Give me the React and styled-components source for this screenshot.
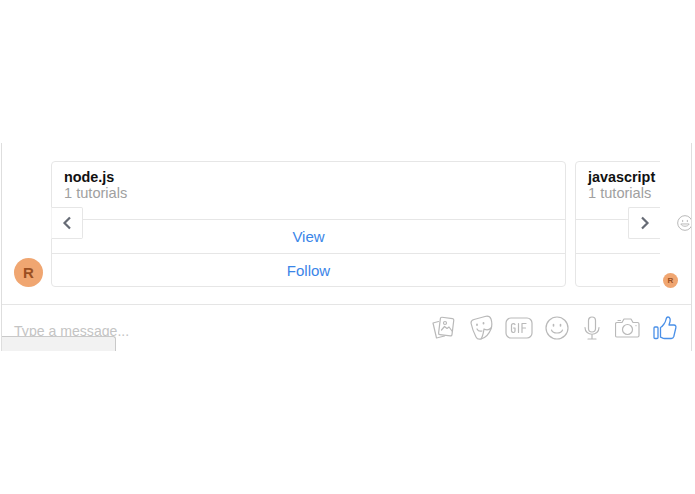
import React from "react";
import styled, { createGlobalStyle } from "styled-components";

const Global = createGlobalStyle`
  html, body { margin: 0; background: #fff; }
  body { font-family: "Liberation Sans", Arial, sans-serif; }
`;

const Page = styled.div`
  padding-top: 143px;
  height: 351px;
`;

const Frame = styled.div`
  position: relative;
  width: 689px;
  height: 208px;
  margin-left: 1px;
  border-left: 1px solid #dedede;
  border-right: 1px solid #dedede;
  overflow: hidden;
`;

const Messages = styled.div`
  display: flex;
  height: 162px;
  box-sizing: border-box;
  padding: 18px 0 17px 12px;
  border-bottom: 1px solid #e5e5e5;
`;

const Avatar = styled.div`
  flex: none;
  align-self: flex-end;
  width: ${(p) => p.$size}px;
  height: ${(p) => p.$size}px;
  border-radius: 50%;
  background: #f0a671;
  color: #9a4f22;
  font-weight: bold;
  font-size: ${(p) => (p.$size > 20 ? 15 : 8)}px;
  line-height: ${(p) => p.$size}px;
  text-align: center;
`;

const Carousel = styled.div`
  position: relative;
  flex: none;
  display: flex;
  gap: 9px;
  width: 609px;
  margin-left: 8px;
  overflow: hidden;
`;

const Card = styled.div`
  flex: none;
  width: 515px;
  height: 126px;
  box-sizing: border-box;
  border: 1px solid #e6e6e6;
  border-radius: 4px;
`;

const CardHead = styled.div`
  height: 57px;
  box-sizing: border-box;
  padding: 7px 12px 0;
`;

const CardTitle = styled.div`
  font-size: 14.4px;
  font-weight: bold;
  line-height: 17px;
  color: #111;
`;

const CardSub = styled.div`
  font-size: 14.6px;
  line-height: 15px;
  color: #a0a0a0;
`;

const CardAction = styled.div`
  height: 34px;
  box-sizing: border-box;
  border-top: 1px solid #e6e6e6;
  font-size: 15px;
  line-height: 33px;
  text-align: center;
  color: #3a85e8;
`;

const Arrow = styled.div`
  position: absolute;
  top: 46px;
  ${(p) => (p.$side === "left" ? "left: 0;" : "right: 0;")}
  display: flex;
  align-items: center;
  justify-content: center;
  width: 32px;
  height: 32px;
  box-sizing: border-box;
  background: #fff;
  border: 1px solid #e6e6e6;
  ${(p) => (p.$side === "left" ? "border-left-color: #f3f3f3;" : "border-right: 0;")}
  border-radius: ${(p) => (p.$side === "left" ? "0 2px 2px 0" : "2px 0 0 2px")};
`;

const Side = styled.div`
  flex: none;
  display: flex;
  flex-direction: column;
  align-items: flex-start;
  width: 30px;
`;

const SideEmoji = styled.svg`
  display: block;
  width: 16px;
  height: 16px;
  margin: 54px 0 0 17px;
`;

const SeenAvatar = styled(Avatar)`
  align-self: flex-start;
  margin: auto 0 -1px 3px;
`;

const Composer = styled.div`
  display: flex;
  align-items: center;
  height: 46px;
  padding-left: 12px;
`;

const Placeholder = styled.div`
  flex: 1;
  font-size: 14.1px;
  line-height: 17px;
  color: #c4c4c4;
  padding-top: 7px;
`;

const Icons = styled.div`
  display: flex;
  align-items: center;
  margin-right: 6px;
`;

const IconSlot = styled.div`
  display: flex;
  justify-content: center;
  width: ${(p) => p.$w}px;
`;

const Tray = styled.div`
  position: absolute;
  left: -2px;
  bottom: 0;
  width: 114px;
  height: 14px;
  background: #f2f2f2;
  border: 1px solid #c9c9c9;
  border-bottom: 0;
  border-radius: 0 3px 0 0;
`;

const gray = { fill: "none", stroke: "#b9b9b9", strokeWidth: 1.2, strokeLinecap: "round", strokeLinejoin: "round" };

const Chevron = ({ left }) => (
  <svg width="10" height="14" viewBox="0 0 10 14">
    <path d={left ? "M8 1.5 2.5 7 8 12.5" : "M2 1.5 7.500 7 2 12.5"} fill="none" stroke="#666b75" strokeWidth="2.200" />
  </svg>
);

const PhotosIcon = () => (
  <svg width="23" height="24" viewBox="0 0 23 24" {...gray}>
    <path d="M6.500 5.500 1 7l3.500 15 8-2" />
    <rect x="7.500" y="1.800" width="13.500" height="17.500" rx="1.500" transform="rotate(7 14 10)" />
    <circle cx="13" cy="7" r="1.500" />
    <path d="m9.500 14 3-3.500 2.500 2 2-1.500 3 4" />
  </svg>
);

const StickerIcon = () => (
  <svg width="24" height="26" viewBox="0 0 24 26" {...gray}>
    <path d="M2 8c0-2 1-3 3-3.500L16 1.500c3-.8 5 0 6 2.500 1 3 1 7 0 10-2 5-6 9-10 10-2 .5-4 0-5-2-2-4-4-9-5-14z" />
    <path d="M22 13c-2 2-5 2-7 1-.5 3-1 7-3 10" />
    <path d="M8 14c1 2 3 2.500 5 2" />
    <path d="M8 9.500v.5M14.500 8v.5" strokeWidth="1.800" />
  </svg>
);

const GifIcon = () => (
  <svg width="28" height="22" viewBox="0 0 28 22" {...gray}>
    <rect x="1" y="1" width="26" height="20" rx="5" />
    <path d="M10 7.500C9.500 6.500 7 6 6.500 8v6c.5 2 3.500 2 3.500 0v-3H8.500M13.500 6.500v9M17 15.500v-9h4M17 11h3.500" />
  </svg>
);

const SmileIcon = () => (
  <svg width="24" height="24" viewBox="0 0 24 24" {...gray}>
    <circle cx="12" cy="12" r="11" />
    <path d="M6.500 14c1.500 4 9.500 4 11 0" />
    <path d="M8.500 8.500v1.500M15.500 8.500v1.500" strokeWidth="1.600" />
  </svg>
);

const MicIcon = () => (
  <svg width="16" height="24" viewBox="0 0 16 24" {...gray}>
    <rect x="4.500" y="1" width="7" height="15" rx="3.500" />
    <path d="M1 11.500c0 9 14 9 14 0M8 19v4M4 23h8" />
  </svg>
);

const CameraIcon = () => (
  <svg width="25" height="20" viewBox="0 0 25 20" {...gray}>
    <path d="M2 4.500h5l2-3.500h7l2 3.500h4.500c1 0 1.500 .5 1.500 1.500v11.500c0 1-.5 1.500-1.500 1.500H2c-1 0-1.500-.5-1.500-1.500V6c0-1 .5-1.500 1.500-1.500z" />
    <circle cx="12.500" cy="11.500" r="5" />
    <path d="M3 2.500h2.500M21 7.500v.2" />
  </svg>
);

const ThumbIcon = () => (
  <svg width="24" height="24" viewBox="0 0 24 24" fill="none" stroke="#4a90e8" strokeWidth="1.300" strokeLinejoin="round">
    <rect x="1" y="11" width="4" height="11.500" rx="1" />
    <path d="M7.500 11.500c2-1 5-5 5.500-8 .3-1.500 1-2.500 2-2.500 2 0 2.500 2.500 2 4.500-.3 1.500-1 3-1 3.500h5c1.500 0 2.300 1.500 1.800 3l-2 8.500c-.4 1.300-1.300 2-2.500 2h-7c-1.500 0-2.300-1-3.800-1.300z" />
  </svg>
);

const tools = [
  { w: 37, icon: <PhotosIcon /> },
  { w: 38, icon: <StickerIcon /> },
  { w: 38, icon: <GifIcon /> },
  { w: 37, icon: <SmileIcon /> },
  { w: 34, icon: <MicIcon /> },
  { w: 36, icon: <CameraIcon /> },
  { w: 40, icon: <ThumbIcon /> },
];

const Topic = ({ name, actions }) => (
  <Card>
    <CardHead>
      <CardTitle>{name}</CardTitle>
      <CardSub>1 tutorials</CardSub>
    </CardHead>
    <CardAction>{actions && "View"}</CardAction>
    <CardAction>{actions && "Follow"}</CardAction>
  </Card>
);

const App = () => {
  return (
    <Page>
      <Global />
      <Frame>
        <Messages>
          <Avatar $size={29}>R</Avatar>
          <Carousel>
            <Topic name="node.js" actions />
            <Topic name="javascript" />
            <Arrow $side="left">
              <Chevron left />
            </Arrow>
            <Arrow $side="right">
              <Chevron />
            </Arrow>
          </Carousel>
          <Side>
            <SideEmoji viewBox="0 0 24 24" {...gray} strokeWidth={1.5}>
              <circle cx="12" cy="12" r="11" />
              <path d="M6 14c1.500 4 10.500 4 12 0z" />
              <path d="M8.500 8v2M15.500 8v2" />
            </SideEmoji>
            <SeenAvatar $size={15}>R</SeenAvatar>
          </Side>
        </Messages>
        <Composer>
          <Placeholder>Type a message...</Placeholder>
          <Icons>
            {tools.map((t, i) => (
              <IconSlot key={i} $w={t.w}>
                {t.icon}
              </IconSlot>
            ))}
          </Icons>
        </Composer>
        <Tray />
      </Frame>
    </Page>
  );
};

export default App;
